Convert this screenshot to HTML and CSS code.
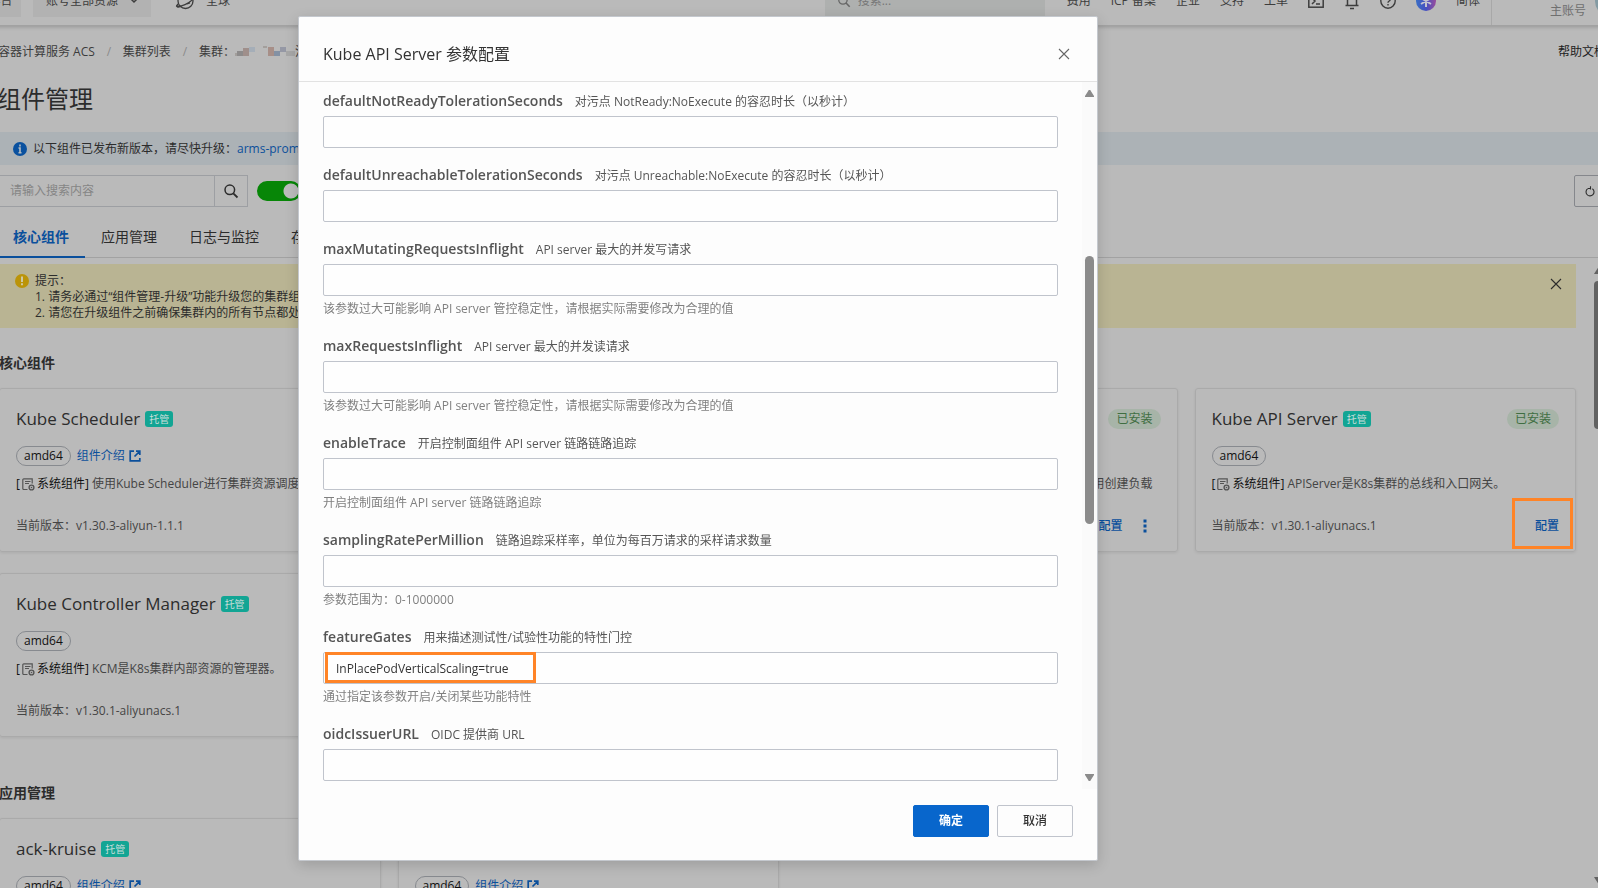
FILE: index.html
```html
<!DOCTYPE html>
<html lang="zh-CN">
<head>
<meta charset="utf-8">
<title>组件管理</title>
<link rel="stylesheet" href="styles.css">
</head>
<body>
<svg class="sprite" width="0" height="0" aria-hidden="true">
  <symbol id="i-close" viewBox="0 0 12 12"><path d="M1 1l10 10M11 1L1 11" fill="none" stroke="currentColor" stroke-width="1.1"/></symbol>
  <symbol id="i-ext" viewBox="0 0 12 12"><path d="M5 1.2H1.2v9.6h9.6V8M7 1.2h3.8V5M10.500 1.500L5.500 6.500" fill="none" stroke="currentColor" stroke-width="1.7"/></symbol>
  <symbol id="i-sys" viewBox="0 0 13 13"><path d="M5.500 11.500H1.800a1 1 0 0 1-1-1V1.800a1 1 0 0 1 1-1h8.400v4.700M3 3.500h5.500M3 5.500h4" fill="none" stroke="currentColor" stroke-width="1.200"/><circle cx="9.500" cy="9.500" r="2.400" fill="none" stroke="currentColor" stroke-width="1.400"/><circle cx="9.500" cy="9.500" r=".8" fill="currentColor"/></symbol>
  <symbol id="i-search" viewBox="0 0 16 16"><circle cx="6.800" cy="6.800" r="4.800" fill="none" stroke="currentColor" stroke-width="1.500"/><path d="M10.300 10.300L14.500 14.500" stroke="currentColor" stroke-width="1.800"/></symbol>
</svg>

<div class="page">
  <header class="topbar">
    <button class="top-btn" type="button">工作台</button>
    <button class="top-btn top-btn--account" type="button">账号全部资源
      <svg width="8" height="6" viewBox="0 0 8 6"><path d="M1 1l3 3 3-3" fill="none" stroke="currentColor" stroke-width="1.500"/></svg>
    </button>
    <button class="region" type="button">
      <svg width="20" height="18" viewBox="0 0 20 18"><circle cx="10.500" cy="9" r="7.500" fill="none" stroke="currentColor" stroke-width="1.300"/><path d="M1 14c5 1 13-2 18-8M3 12c-3 3 0 4 4 2M12 12l3-1" fill="none" stroke="currentColor" stroke-width="1.300"/></svg>
      全球
    </button>
    <label class="top-search">
      <svg width="14" height="14"><use href="#i-search"/></svg>
      <input type="text" placeholder="搜索..." aria-label="搜索">
    </label>
    <nav class="top-nav">
      <a href="#">费用</a><a href="#">ICP 备案</a><a href="#">企业</a><a href="#">支持</a><a href="#">工单</a>
      <svg width="16" height="14" viewBox="0 0 16 14"><rect x=".8" y=".8" width="14.400" height="12.400" fill="none" stroke="currentColor" stroke-width="1.500"/><path d="M4 4l3 3-3 3M8 10h4" fill="none" stroke="currentColor" stroke-width="1.500"/></svg>
      <svg width="16" height="18" viewBox="0 0 16 18"><path d="M3.500 13.500V7a4.500 4.500 0 0 1 9 0v6.500M1.500 13.500h13M6 16.500h4" fill="none" stroke="currentColor" stroke-width="1.500"/></svg>
      <svg width="16" height="16" viewBox="0 0 16 16"><circle cx="8" cy="8" r="7.200" fill="none" stroke="currentColor" stroke-width="1.400"/><path d="M5.800 6.200a2.200 2.200 0 1 1 3.400 1.800c-.8.500-1.200.9-1.200 1.800M8 11v1.500" fill="none" stroke="currentColor" stroke-width="1.400"/></svg>
      <svg width="20" height="20" viewBox="0 0 20 20"><defs><linearGradient id="ai" x1="0" x2="1"><stop offset="0" stop-color="#3a6fc4"/><stop offset=".5" stop-color="#4550c0"/><stop offset="1" stop-color="#9a4c9c"/></linearGradient></defs><circle cx="10" cy="10" r="10" fill="url(#ai)"/><path d="M10 4v12M5 7l10 6M15 7L5 13" stroke="#c3c3cf" stroke-width="2"/></svg>
      <a href="#">简体</a>
    </nav>
    <div class="account">
      <div class="account-name"><span>主账号</span></div>
      <span class="avatar"></span>
    </div>
  </header>

  <nav class="crumbs" aria-label="面包屑">
    <a href="#">容器计算服务 ACS</a><i>/</i><a href="#">集群列表</a><i>/</i>
    <span class="crumb-current">集群：<svg width="60" height="10" viewBox="0 0 60 10" shape-rendering="crispEdges"><path fill="#8d8b8b" d="M2 5h6v5H2z"/><path fill="#9f8f8b" d="M8 2h6v8H8z"/><path fill="#a5aeb8" d="M14 1h6v5h-6z"/><path fill="#a39f9c" d="M0 7h2v3H0zM28 0h4v2h-4z"/><path fill="#a78f88" d="M33 1h6v9h-6z"/><path fill="#8391a4" d="M39 5h6v5h-6z"/><path fill="#9598a5" d="M45 1h6v5h-6z"/><path fill="#a7a7a7" d="M51 5h9v5h-9z"/></svg>注册</span>
    <a class="crumb-help" href="#">帮助文档</a>
  </nav>

  <h1 class="title">组件管理</h1>

  <div class="info">
    <svg width="14" height="14" viewBox="0 0 14 14"><circle cx="7" cy="7" r="7" fill="#0a519f"/><path d="M7 2.500v2M5.500 6H7v4.500M5.500 10.800h3" stroke="#b4bcc2" stroke-width="1.600" fill="none"/></svg>
    <span>以下组件已发布新版本，请尽快升级：<a href="#">arms-prometheus</a></span>
  </div>

  <div class="tools">
    <div class="search">
      <input type="text" placeholder="请输入搜索内容" aria-label="搜索组件">
      <button type="button" aria-label="搜索"><svg width="16" height="16"><use href="#i-search"/></svg></button>
    </div>
    <input class="switch" type="checkbox" role="switch" checked aria-label="仅看可升级">
    <button class="refresh" type="button" aria-label="刷新"><svg width="10" height="11" viewBox="0 0 10 11"><path d="M2.800 2.600A4 4 0 1 0 7.400 2.700M3 2.500h2.500M5.500.3v3.200" fill="none" stroke="currentColor" stroke-width="1.100"/></svg></button>
  </div>

  <div class="tabs" role="tablist">
    <button class="tab tab--on" type="button" role="tab" aria-selected="true">核心组件</button>
    <button class="tab" type="button" role="tab">应用管理</button>
    <button class="tab" type="button" role="tab">日志与监控</button>
    <button class="tab" type="button" role="tab">存储</button>
  </div>

  <div class="scroller">
    <main class="content">
      <div class="notice">
        <svg width="14" height="14" viewBox="0 0 14 14"><circle cx="7" cy="7" r="7" fill="#bb9409"/><path d="M7 2.500v5.500M7 9.300v2" stroke="#cfc8a4" stroke-width="2"/></svg>
        <div>提示：<br>1. 请务必通过“组件管理-升级”功能升级您的集群组件<br>2. 请您在升级组件之前确保集群内的所有节点都处于</div>
        <button type="button" aria-label="关闭"><svg width="12" height="12"><use href="#i-close"/></svg></button>
      </div>

      <section>
        <h2>核心组件</h2>
        <div class="grid">
          <article class="card">
            <div class="card-head"><h3>Kube Scheduler</h3><span class="tag">托管</span></div>
            <div class="card-meta"><span class="arch">amd64</span><a href="#">组件介绍 <svg width="12" height="12"><use href="#i-ext"/></svg></a></div>
            <p class="desc"><b>[ <svg width="13" height="13"><use href="#i-sys"/></svg> 系统组件]</b> 使用Kube Scheduler进行集群资源调度</p>
            <div class="card-foot">当前版本：v1.30.3-aliyun-1.1.1</div>
          </article>
          <article class="card"></article>
          <article class="card">
            <div class="card-head"><span class="status">已安装</span></div>
            <div class="card-meta"></div>
            <p class="desc desc--end">用创建负载</p>
            <div class="card-foot"><div class="actions"><button type="button">配置</button><button class="more" type="button" aria-label="更多"><svg width="4" height="14" viewBox="0 0 4 14"><path d="M.5.5h3v3h-3zM.5 5.500h3v3h-3zM.5 10.500h3v3h-3z" fill="currentColor"/></svg></button></div></div>
          </article>
          <article class="card">
            <div class="card-head"><h3>Kube API Server</h3><span class="tag">托管</span><span class="status">已安装</span></div>
            <div class="card-meta"><span class="arch">amd64</span></div>
            <p class="desc"><b>[ <svg width="13" height="13"><use href="#i-sys"/></svg> 系统组件]</b> APIServer是K8s集群的总线和入口网关。</p>
            <div class="card-foot">当前版本：v1.30.1-aliyunacs.1<div class="actions"><button class="marked" type="button">配置</button></div></div>
          </article>
          <article class="card">
            <div class="card-head"><h3>Kube Controller Manager</h3><span class="tag">托管</span></div>
            <div class="card-meta"><span class="arch">amd64</span></div>
            <p class="desc"><b>[ <svg width="13" height="13"><use href="#i-sys"/></svg> 系统组件]</b> KCM是K8s集群内部资源的管理器。</p>
            <div class="card-foot">当前版本：v1.30.1-aliyunacs.1</div>
          </article>
        </div>
      </section>

      <section>
        <h2>应用管理</h2>
        <div class="grid">
          <article class="card">
            <div class="card-head"><h3>ack-kruise</h3><span class="tag">托管</span></div>
            <div class="card-meta"><span class="arch">amd64</span><a href="#">组件介绍 <svg width="12" height="12"><use href="#i-ext"/></svg></a></div>
          </article>
          <article class="card">
            <div class="card-head"></div>
            <div class="card-meta"><span class="arch">amd64</span><a href="#">组件介绍 <svg width="12" height="12"><use href="#i-ext"/></svg></a></div>
          </article>
        </div>
      </section>
    </main>
    <div class="page-bar"><svg width="9" height="7" viewBox="0 0 9 7"><path d="M4.500 0L9 7H0z" fill="currentColor"/></svg><span class="page-thumb"></span><svg class="down" width="9" height="7" viewBox="0 0 9 7"><path d="M4.500 7L0 0h9z" fill="currentColor"/></svg></div>
  </div>
</div>

<div class="backdrop">
  <div class="modal" role="dialog" aria-modal="true" aria-labelledby="dlg-title">
    <div class="modal-head">
      <h2 id="dlg-title">Kube API Server 参数配置</h2>
      <button type="button" aria-label="关闭"><svg width="12" height="12"><use href="#i-close"/></svg></button>
    </div>
    <div class="modal-body">
      <form class="fields">
        <div class="field"><label for="f1"><strong>defaultNotReadyTolerationSeconds</strong>对污点 NotReady:NoExecute 的容忍时长（以秒计）</label><input id="f1" type="text"></div>
        <div class="field"><label for="f2"><strong>defaultUnreachableTolerationSeconds</strong>对污点 Unreachable:NoExecute 的容忍时长（以秒计）</label><input id="f2" type="text"></div>
        <div class="field"><label for="f3"><strong>maxMutatingRequestsInflight</strong>API server 最大的并发写请求</label><input id="f3" type="text"><p>该参数过大可能影响 API server 管控稳定性，请根据实际需要修改为合理的值</p></div>
        <div class="field"><label for="f4"><strong>maxRequestsInflight</strong>API server 最大的并发读请求</label><input id="f4" type="text"><p>该参数过大可能影响 API server 管控稳定性，请根据实际需要修改为合理的值</p></div>
        <div class="field"><label for="f5"><strong>enableTrace</strong>开启控制面组件 API server 链路链路追踪</label><input id="f5" type="text"><p>开启控制面组件 API server 链路链路追踪</p></div>
        <div class="field"><label for="f6"><strong>samplingRatePerMillion</strong>链路追踪采样率，单位为每百万请求的采样请求数量</label><input id="f6" type="text"><p>参数范围为：0-1000000</p></div>
        <div class="field"><label for="f7"><strong>featureGates</strong>用来描述测试性/试验性功能的特性门控</label><div class="marked-input"><input id="f7" type="text" value="InPlacePodVerticalScaling=true"></div><p>通过指定该参数开启/关闭某些功能特性</p></div>
        <div class="field"><label for="f8"><strong>oidcIssuerURL</strong>OIDC 提供商 URL</label><input id="f8" type="text"></div>
      </form>
      <div class="bar"><svg width="9" height="7" viewBox="0 0 9 7"><path d="M3.500.5a1 1 0 0 1 2 0L9 6v1H0V6z" fill="currentColor"/></svg><span class="bar-thumb"></span><svg width="9" height="7" viewBox="0 0 9 7"><path d="M3.500 6.500a1 1 0 0 0 2 0L9 1V0H0v1z" fill="currentColor"/></svg></div>
    </div>
    <div class="modal-foot">
      <button class="btn btn--primary" type="button">确定</button>
      <button class="btn" type="button">取消</button>
    </div>
  </div>
</div>
</body>
</html>
```
FILE: styles.css
```css
*, *::after { box-sizing: border-box; }

html, body { height: 100%; }

body {
  margin: 0;
  overflow: hidden;
  background: #bababa;
  color: #2c2c2c;
  font: 12px/20px "Open Sans", "Noto Sans CJK SC", sans-serif;
}

h1, h2, h3, p { margin: 0; font-weight: 400; }
a { color: #0b4f9b; text-decoration: none; }
svg { flex: none; }
button, input { font: inherit; color: inherit; }
button { padding: 0; border: 0; background: none; }
button > svg { display: block; }
input { margin: 0; }
.sprite { position: absolute; }

.page {
  display: flex;
  flex-direction: column;
  height: 100%;
}

/* Top bar */
.topbar {
  display: flex;
  flex: none;
  align-items: center;
  height: 50px;
  margin: -24px -32px 0 -32px;
  border-bottom: 1px solid #a2a2a2;
  box-shadow: 0 1px 4px rgba(0, 0, 0, .2);
  color: #3d3d3d;
}
.topbar a { color: inherit; }
.top-btn {
  width: 53px;
  height: 32px;
  margin-right: 12px;
  background: #b2b2b2;
}
.top-btn--account {
  display: flex;
  align-items: center;
  gap: 12px;
  width: 118px;
  padding-left: 13px;
  margin-right: 24px;
}
.region {
  display: flex;
  align-items: center;
  gap: 11px;
}
.top-search {
  display: flex;
  align-items: center;
  gap: 7px;
  width: 220px;
  height: 32px;
  padding-left: 12px;
  margin-left: auto;
  background: #aeb0af;
  color: #666;
}
.top-search input {
  width: 160px;
  padding: 0;
  border: 0;
  background: none;
}
.top-search input::placeholder { color: #777; }
.top-nav {
  display: flex;
  align-items: center;
  gap: 20px;
  padding: 0 11px 0 22px;
}
.account {
  display: flex;
  align-items: center;
  gap: 9px;
  height: 100%;
  width: 139px;
  padding-left: 58px;
  border-left: 1px solid #a8a8a8;
  color: #6f6f6f;
}
.account-name {
  align-self: flex-end;
  padding-bottom: 4px;
}
.avatar {
  width: 32px;
  height: 32px;
  border-radius: 50%;
  background: #849ba3;
}

/* Page heading */
.crumbs {
  display: flex;
  align-items: center;
  height: 20px;
  margin: 16px -8px 0 -2px;
}
.crumbs a, .crumb-current { color: #3c3c3c; white-space: nowrap; }
.crumbs i { width: 28px; text-align: center; color: #8a8a8a; font-style: normal; }
.crumbs .crumb-help { margin-left: auto; color: #222; }
.title {
  margin: 19px 0 15px -3px;
  font-size: 24px;
  line-height: 36px;
}
.info {
  display: flex;
  align-items: center;
  gap: 6px;
  height: 33px;
  padding-left: 13px;
  background: #acb2b6;
}
.tools {
  display: flex;
  align-items: center;
  margin: 10px -8px 0 -1px;
}
.search {
  display: flex;
  width: 249px;
  height: 32px;
  border: 1px solid #9d9fa3;
}
.search input {
  width: 214px;
  padding: 0 10px;
  border: 0;
  background: none;
}
.search input::placeholder { color: #858585; }
.search button {
  display: flex;
  flex: 1;
  align-items: center;
  justify-content: center;
  border-left: 1px solid #9d9fa3;
}
.switch {
  appearance: none;
  width: 44px;
  height: 20px;
  margin-left: 9px;
  border: 2px solid #078607;
  border-radius: 10px;
  background: radial-gradient(circle at 32px 8px, #bcbcbc 7px, #078607 8px);
}
.refresh {
  display: flex;
  align-items: center;
  width: 32px;
  height: 32px;
  padding-left: 10px;
  margin-left: auto;
  border: 1px solid #85878c;
  border-radius: 2px;
}
.tabs {
  display: flex;
  height: 41px;
  margin-top: 10px;
  padding-right: 8px;
  border-bottom: 1px solid #a2a2a2;
  margin-left: -3px;
}
.tab {
  height: 41px;
  padding: 0 16px;
  border-bottom: 2px solid transparent;
  font-size: 14px;
}
.tab--on {
  border-color: #0a4f9c;
  color: #0a4f9c;
  font-weight: 700;
}

/* Component list */
.scroller {
  display: flex;
  flex: 1;
  min-height: 0;
  overflow: hidden;
}
.content {
  flex: 1;
  min-width: 0;
  padding-top: 6px;
  margin-right: 18px;
}
.notice {
  display: flex;
  gap: 6px;
  padding: 9px 14px 7px 15px;
  background: #b9b493;
  line-height: 16px;
}
.notice > svg { margin-top: 1px; }
.notice button {
  align-self: flex-start;
  margin: 5px 0 0 auto;
}
section { margin: 25px 0 0 -1px; padding-bottom: 21px; }
section h2 {
  margin-bottom: 15px;
  font-size: 14px;
  font-weight: 700;
}
.grid {
  display: grid;
  grid-template-columns: repeat(4, 1fr);
  gap: 21px 17px;
}
.card {
  display: flex;
  flex-direction: column;
  min-height: 164px;
  padding: 15px 16px;
  border: 1px solid #aaa;
  border-radius: 3px;
  box-shadow: 0 1px 3px rgba(0, 0, 0, .08);
}
.card-head {
  display: flex;
  align-items: center;
  gap: 5px;
  height: 30px;
}
.card-head h3 { font-size: 17px; line-height: 24px; }
.tag {
  padding: 0 4px;
  border-radius: 3px;
  background: #12a594;
  color: #ccdedb;
  font-size: 10px;
  line-height: 16px;
}
.status {
  margin-left: auto;
  padding: 0 8px;
  border-radius: 10px;
  background: #a7b4a8;
  color: #3f6e42;
}
.card-meta {
  display: flex;
  align-items: center;
  gap: 6px;
  height: 20px;
  margin-top: 12px;
}
.card-meta a {
  display: flex;
  align-items: center;
  gap: 4px;
}
.arch {
  padding: 0 7px;
  border: 1px solid #878a8f;
  border-radius: 10px;
  color: #111;
  line-height: 18px;
}
.desc {
  display: flex;
  gap: 3px;
  margin-top: 8px;
  color: #444;
  white-space: nowrap;
}
.desc--end { justify-content: flex-end; padding-right: 8px; }
.desc b {
  display: flex;
  align-items: center;
  gap: 2px;
  color: #111;
  font-weight: 400;
}
.desc svg { color: #555; }
.card-foot {
  display: flex;
  align-items: center;
  height: 20px;
  margin-top: auto;
  color: #454545;
}
.actions {
  display: flex;
  gap: 6px;
  margin-left: auto;
  color: #0a4f9c;
}
.actions button { font-weight: 500; }
.more {
  display: flex;
  align-items: center;
  justify-content: center;
  width: 32px;
}
.marked { position: relative; }
.marked::after {
  content: "";
  position: absolute;
  inset: -18px -14px -13px -23px;
  border: 3px solid #ff8427;
}
.page-bar {
  display: flex;
  flex-direction: column;
  width: 12px;
  margin-right: -8px;
  padding: 9px 0 4px;
  color: #626262;
}
.page-thumb {
  height: 148px;
  margin-top: 7px;
  border-radius: 4px;
  background: #626262;
}
.page-bar .down { margin-top: auto; }

/* Dialog */
.backdrop {
  position: fixed;
  inset: 0;
  padding: 16px 0 0 298px;
}
.modal {
  max-width: 800px;
  border: 1px solid #c4c8ce;
  border-radius: 2px;
  background: #fdfdfd;
  box-shadow: 0 4px 14px rgba(0, 0, 0, .16);
}
.modal-head {
  display: flex;
  align-items: center;
  justify-content: space-between;
  height: 65px;
  padding: 9px 27px 0 24px;
  border-bottom: 1px solid #e2e2e2;
}
.modal-head h2 { font-size: 16px; color: #333; }
.modal-head button { color: #666; }
.modal-body { display: flex; }
.fields {
  display: flex;
  flex: 1;
  flex-direction: column;
  gap: 16px;
  padding: 8px 24px;
}
.field {
  display: flex;
  flex-direction: column;
}
.field label {
  margin-bottom: 3px;
  color: #555;
  line-height: 22px;
}
.field strong {
  margin-right: 12px;
  font-size: 14px;
  font-weight: 600;
}
.field input {
  width: 100%;
  height: 32px;
  padding: 0 12px;
  border: 1px solid #c0c4cc;
  border-radius: 2px;
  background: #fefefe;
  color: #333;
}
.field p {
  padding-top: 3px;
  color: #808080;
}
.marked-input { position: relative; height: 32px; }
.marked-input::after {
  content: "";
  position: absolute;
  top: 0;
  left: 2px;
  width: 211px;
  height: 31px;
  border: 3px solid #ff8427;
}
.bar {
  display: flex;
  flex-direction: column;
  align-items: center;
  width: 15px;
  padding: 8px 0;
  background: #fafafa;
  color: #8b8b8b;
}
.bar-thumb {
  width: 9px;
  height: 268px;
  margin: 159px 0 auto;
  border-radius: 5px;
  background: #8b8b8b;
}
.modal-foot {
  display: flex;
  justify-content: flex-end;
  gap: 8px;
  padding: 16px 24px 23px;
}
.btn {
  width: 76px;
  height: 32px;
  border: 1px solid #c0c4cc;
  border-radius: 2px;
  color: #333;
  font-weight: 500;
}
.btn--primary {
  border-color: #0866cc;
  background: #0866cc;
  color: #fff;
  font-weight: 700;
}
```
